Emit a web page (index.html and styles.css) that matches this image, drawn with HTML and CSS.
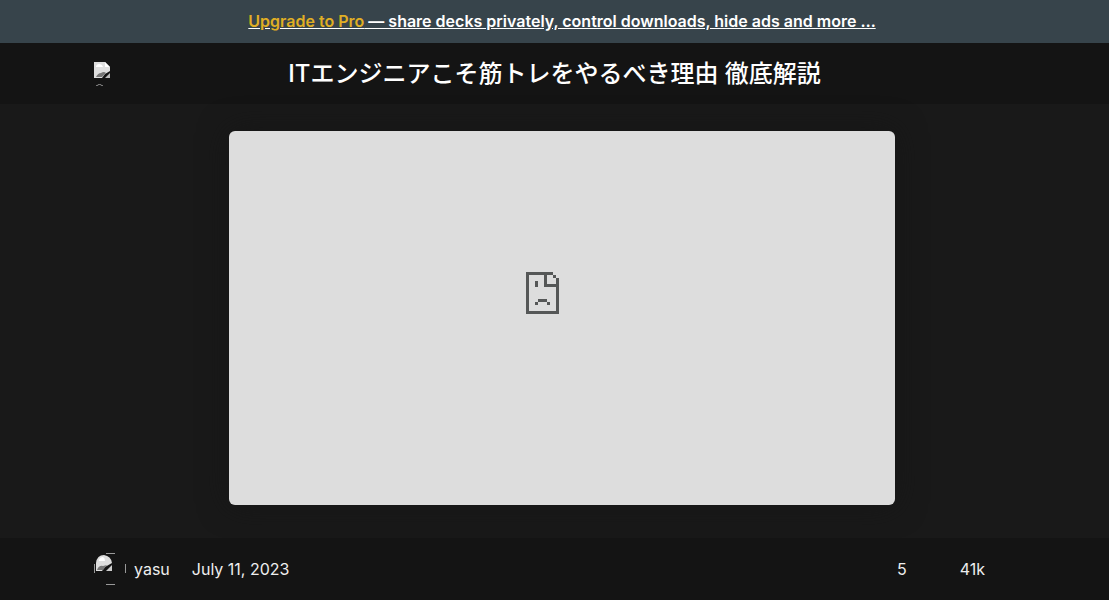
FILE: index.html
```html
<!DOCTYPE html>
<html lang="ja">
<head>
<meta charset="utf-8">
<meta name="viewport" content="width=device-width, initial-scale=1">
<title>ITエンジニアこそ筋トレをやるべき理由 徹底解説</title>
<link rel="stylesheet" href="styles.css">
</head>
<body>
<aside class="promo"><a class="promo-link" href="#"><span class="promo-accent">Upgrade to Pro</span> — share decks privately, control downloads, hide ads and more …</a></aside>
<header class="header">
  <a class="logo" href="#" aria-label="Home">
    <svg width="16" height="24" viewBox="0 0 16 24" aria-hidden="true">
      <path fill="#dedede" d="M0 0h11l5 5v4l-5 3-3 4H0z"/>
      <path fill="#fff" d="M2 4q1-2 3-2 3 0 4 3H2zM11 0l5 5h-5z"/>
      <path fill="#777" d="M2 15q2-4 5-4 3-2 5 0l-4 4z"/>
      <path fill="#bbb" d="M16 11v5h-5z"/>
      <path fill="none" stroke="#777" d="M2 23.500h2v-1h3v1h2"/>
    </svg>
  </a>
  <h1 class="title">ITエンジニアこそ筋トレをやるべき理由 徹底解説</h1>
</header>
<main class="stage">
  <div class="deck">
    <svg class="sad-page" width="33" height="42" viewBox="0 0 11 14" shape-rendering="crispEdges" role="img" aria-label="Content unavailable">
      <path fill="#555757" d="M0 0h9v1H7v3h3V2h1v12H0zM1 1v12h9V5H6V1zM9 1h1v1H9zM3 3h1v2H3zM4 9h3v1H4zM3 10h1v1H3zM7 10h1v1H7z" fill-rule="evenodd"/>
    </svg>
  </div>
</main>
<footer class="footer">
  <a class="author" href="#">
    <svg width="32" height="32" viewBox="0 0 32 32" aria-hidden="true">
      <path fill="#dedede" d="M2 10Q3 2 10 2q7 1 8 8l-7 4-3 4H2z"/>
      <path fill="#fff" d="M5 7q1-3 4-3 2 1 2 4H5z"/>
      <path fill="#777" d="M3 17q2-5 6-4l4-1-4 5z"/>
      <path fill="#ccc" d="M18 12v6h-6z"/>
      <path fill="none" stroke="#999" d="M12 .5h9M12 31.500h9M.5 11v9M31.500 11v9"/>
    </svg>
    <span>yasu</span>
  </a>
  <time datetime="2023-07-11">July 11, 2023</time>
  <div class="stats"><span>5</span><span>41k</span></div>
</footer>
</body>
</html>
```
FILE: styles.css
```css
* { box-sizing: border-box; }
body {
  margin: 0;
  min-height: 100vh;
  display: flex;
  flex-direction: column;
  background: #191919;
  color: #fff;
  font: 16px/24px Inter, "Noto Sans CJK JP", sans-serif;
}
a { color: inherit; text-decoration: none; }
svg { display: block; }
.promo {
  padding: 9px 0 10px 15px;
  background: #37444b;
  text-align: center;
  font-weight: 600;
}
.promo-link { text-decoration: underline; }
.promo-accent { color: #e0af24; }
.header {
  display: grid;
  grid-template-columns: 1fr auto 1fr;
  align-items: center;
  padding: 13px 94px 12px;
  background: #141414;
}
.title {
  margin: 0;
  font-size: 24px;
  line-height: 36px;
  font-weight: 500;
}
.stage {
  flex: 1;
  padding: 27px 0 32px 15px;
}
.deck {
  display: flex;
  justify-content: center;
  align-items: center;
  width: 60vw;
  max-width: 960px;
  aspect-ratio: 16 / 9;
  margin: 0 auto;
  padding: 0 38px 50px 0;
  border-radius: 6px;
  background: #ddd;
  box-shadow: 0 0 30px #161616;
}
.footer {
  display: flex;
  align-items: center;
  gap: 22px;
  padding: 15px 124px 15px 94px;
  background: #141414;
  color: #eee;
}
.author { display: flex; align-items: center; gap: 8px; }
.stats { display: flex; gap: 53px; margin-left: auto; }
```
